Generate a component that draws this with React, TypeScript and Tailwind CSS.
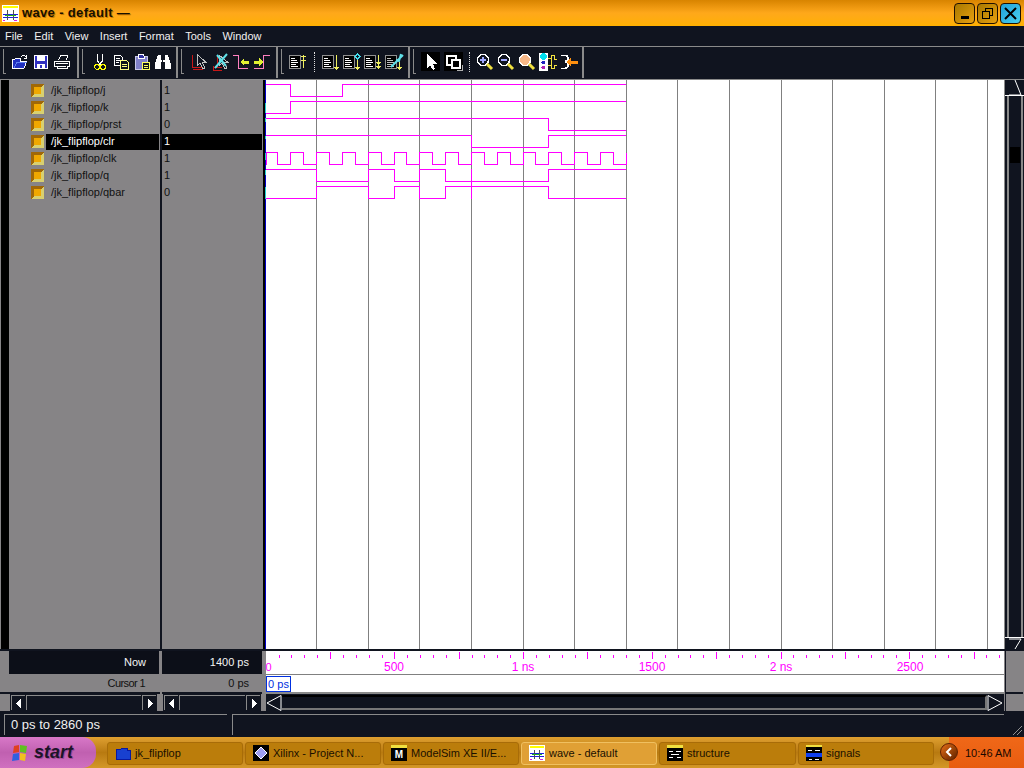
import React from "react";

const SIGNALS = [
  { name: "/jk_flipflop/j", value: "1" },
  { name: "/jk_flipflop/k", value: "1" },
  { name: "/jk_flipflop/prst", value: "0" },
  { name: "/jk_flipflop/clr", value: "1", selected: true },
  { name: "/jk_flipflop/clk", value: "1" },
  { name: "/jk_flipflop/q", value: "1" },
  { name: "/jk_flipflop/qbar", value: "0" },
];

const MENU = ["File", "Edit", "View", "Insert", "Format", "Tools", "Window"];
const GRID = [316, 368, 419, 471, 523, 574, 626, 677, 729, 781, 832, 884, 935, 987];

const WAVES = [
  "M266 84.5H290.5V96.5H342.5V84.5H626",
  "M266 113.5H290.5V101.5H626",
  "M266 118.5H548.5V130.5H626",
  "M266 135.5H471.5V147.5H548.5V135.5H626",
  "M266.5 164.5V152.5H277.5V164.5H290.5V152.5H303.5V164.5H316.5V152.5H329.5V164.5H342.5V152.5H355.5V164.5H368.5V152.5H381.5V164.5H394.5V152.5H406.5V164.5H419.5V152.5H432.5V164.5H445.5V152.5H458.5V164.5H471.5V152.5H484.5V164.5H497.5V152.5H510.5V164.5H523.5V152.5H535.5V164.5H548.5V152.5H561.5V164.5H574.5V152.5H587.5V164.5H600.5V152.5H613.5V164.5H626.5V153",
  "M266 169.5H316.5V181.5H368.5V169.5H394.5V181.5H419.5V169.5H445.5V181.5H548.5V169.5H626",
  "M266 198.5H316.5V186.5H368.5V198.5H394.5V186.5H419.5V198.5H445.5V186.5H548.5V198.5H626",
  "M471.5 169V199",
];

function WaveChart() {
  return (
    <svg className="block" width="741" height="569" viewBox="263 80 741 569" shapeRendering="crispEdges">
      <rect x="263" y="80" width="741" height="569" fill="#ffffff" />
      <rect x="263" y="80" width="2" height="569" fill="#000000" />
      <rect x="265" y="80" width="1" height="569" fill="#0000c8" />
      <path d="M265.5 103V113M265.5 118V122M265.5 136V139M265.5 153V160M265.5 170V175M265.5 187V199" stroke="#20d0d0" fill="none" />
      {GRID.map((x) => (
        <path key={x} d={`M${x + 0.5} 80V649`} stroke="#808080" fill="none" />
      ))}
      {WAVES.map((d, i) => (
        <path key={i} d={d} stroke="#ff00ff" fill="none" />
      ))}
    </svg>
  );
}

function TimeAxis() {
  const ticks = [];
  for (let i = 1; i * 12.87 < 737; i++) {
    const x = Math.round(265.7 + i * 12.87) + 0.5;
    ticks.push(<path key={i} d={i % 5 === 0 ? `M${x} 652V659` : `M${x} 655V658`} stroke="#ff00ff" fill="none" />);
  }
  const labels = [
    { x: 394, t: "500" },
    { x: 523, t: "1 ns" },
    { x: 652, t: "1500" },
    { x: 781, t: "2 ns" },
    { x: 910, t: "2500" },
  ];
  return (
    <svg className="block" width="741" height="23" viewBox="263 651 741 23">
      <rect x="263" y="651" width="741" height="23" fill="#ffffff" />
      <rect x="263" y="651" width="3" height="23" fill="#868486" />
      <g shapeRendering="crispEdges">{ticks}</g>
      <text x="265.5" y="671" fill="#ff00ff" fontSize="11" fontFamily="'Liberation Sans',sans-serif">0</text>
      {labels.map((l) => (
        <text key={l.t} x={l.x} y="671" fill="#ff00ff" fontSize="12" textAnchor="middle" fontFamily="'Liberation Sans',sans-serif">
          {l.t}
        </text>
      ))}
    </svg>
  );
}

function WaveIcon({ size = 16 }: { size?: number }) {
  return (
    <svg width={size} height={size} viewBox="0 0 16 16" shapeRendering="crispEdges" className="shrink-0">
      <rect width="16" height="16" fill="#ffffff" />
      <rect x="1" y="1" width="14" height="2" fill="#ffff00" />
      <path d="M1 8.5H15M1 11.5H15" stroke="#2020e0" />
      <path d="M5.5 5V14M10.5 5V14" stroke="#505050" />
      <path d="M3 9.5H13" stroke="#20b020" />
      <path d="M1 14.5H3M11 14.5H14" stroke="#e020e0" />
    </svg>
  );
}

function SignalIcon() {
  return (
    <svg width="13" height="13" viewBox="0 0 13 13" shapeRendering="crispEdges" className="shrink-0">
      <rect width="13" height="13" fill="#d8c860" />
      <path d="M0 0H13L10 3H3V10L0 13Z" fill="#a06808" />
      <rect x="3" y="3" width="7" height="7" fill="#f0a800" />
      <path d="M10 3L13 0V13H0L3 10H10Z" fill="#d8d070" />
    </svg>
  );
}

const TOOL_ICONS: { [name: string]: React.ReactNode } = {
  open: (
    <>
      <path d="M2 16V7H5L6 6H10V9H17L14 16Z" fill="#2030c0" stroke="#fff" />
      <path d="M4 16L7 10H17" stroke="#6080f0" fill="none" />
      <path d="M11 5C13 3 15 3 16 5M16 3V6H14" stroke="#fff" fill="none" />
    </>
  ),
  save: (
    <>
      <rect x="3.5" y="3.5" width="13" height="13" fill="#3030c0" stroke="#fff" />
      <rect x="6" y="4" width="8" height="5" fill="#fff" />
      <rect x="6" y="12" width="8" height="4" fill="#fff" />
      <rect x="9" y="13" width="2" height="3" fill="#3030c0" />
    </>
  ),
  print: (
    <>
      <path d="M6.5 8.5L8.5 3.5H15.5L14.5 8.5" stroke="#fff" fill="none" />
      <path d="M2.5 9.5H17.5V14.5H15V16.5H5V14.5H2.5Z" stroke="#fff" fill="#10141f" />
      <path d="M4 11.5H16M6 14H14" stroke="#fff" />
    </>
  ),
  cut: (
    <>
      <path d="M7.5 2V9L11 13M12.5 2V9L9 13" stroke="#fff" fill="none" />
      <circle cx="7" cy="15" r="2.3" stroke="#ffff00" fill="none" strokeWidth="1.2" />
      <circle cx="13" cy="15" r="2.3" stroke="#ffff00" fill="none" strokeWidth="1.2" />
    </>
  ),
  copy: (
    <>
      <path d="M3.5 3.5H9.5L11.5 5.5V13.5H3.5Z" fill="#10141f" stroke="#fff" />
      <path d="M5 6H9M5 8H9M5 10H8" stroke="#fff" />
      <path d="M9.5 8.5H15.5L17.5 10.5V17.5H9.5Z" fill="#10141f" stroke="#ffff80" />
      <path d="M11 12H16M11 14H16" stroke="#ffff80" />
    </>
  ),
  paste: (
    <>
      <rect x="3" y="4" width="12" height="13" fill="#8080c8" stroke="#c8c8e8" />
      <path d="M6 4L7 2H11L12 4V6H6Z" fill="#3030a0" stroke="#fff" />
      <rect x="10.5" y="10.5" width="7" height="7" fill="#10141f" stroke="#ffff60" />
      <path d="M12 13H16M12 15H16" stroke="#ffff60" />
    </>
  ),
  find: (
    <>
      <path d="M5 3H8V8H12V3H15L18 12V17H12V10H8V17H2V12Z" fill="#fff" />
      <path d="M9.5 4V16" stroke="#10141f" />
    </>
  ),
  select: (
    <>
      <path d="M3.5 3V16M3.5 15.5H13M3.5 17.5H13M13.5 15V18" stroke="#c81818" fill="none" />
      <path d="M8 2V14L11 11L14 17L16 16L13.5 10.5H17Z" stroke="#c0c0c0" fill="#10141f" />
    </>
  ),
  unselect: (
    <>
      <path d="M3.5 14V18H12M3.5 15H12M7.5 3V15" stroke="#c81818" fill="none" />
      <path d="M9 3V14L12 11L15 17L17 16L14 10.5H18Z" stroke="#c0c0c0" fill="#10141f" />
      <path d="M7 3L16 14M17 2L5 16" stroke="#60e0e8" strokeWidth="2" shapeRendering="auto" />
    </>
  ),
  prev: (
    <>
      <path d="M2 3.5H7.5V16.5H17" stroke="#ff80c0" fill="none" />
      <path d="M9 10L13 6V8.5H18V11.5H13V14Z" fill="#e0f030" />
    </>
  ),
  next: (
    <>
      <path d="M18 3.5H11.5V16.5H2" stroke="#ff80c0" fill="none" />
      <path d="M11 10L7 6V8.5H2V11.5H7V14Z" fill="#e0f030" />
    </>
  ),
};

function List({ tone = "#fff" }: { tone?: string }) {
  return (
    <>
      <rect x="1.5" y="3.5" width="11" height="13" fill="#000" stroke="#909090" />
      <path d="M3 6H7M3 8H9M3 10H10M3 12H8M3 14H10" stroke={tone} />
    </>
  );
}

const MORE_ICONS: { [name: string]: React.ReactNode } = {
  add: (
    <>
      <List />
      <path d="M15.5 3V16M13 4.5H18M13 8.5H18" stroke="#f0f060" />
    </>
  ),
  down: (
    <>
      <List />
      <path d="M15.5 3V15" stroke="#f0f060" />
      <path d="M12 15H19L15.5 18Z" fill="#f0f060" />
    </>
  ),
  diamond: (
    <>
      <List />
      <path d="M15.5 7V15" stroke="#f0f060" />
      <path d="M15.5 2L18 4.5L15.5 7L13 4.5Z" fill="none" stroke="#40e0f0" />
      <path d="M12 15H19L15.5 18Z" fill="#f0f060" />
    </>
  ),
  double: (
    <>
      <List />
      <path d="M15.5 3V14" stroke="#f0f060" />
      <path d="M12 10H19L15.5 13ZM12 14H19L15.5 17Z" fill="#f0f060" />
    </>
  ),
  clear: (
    <>
      <List tone="#c0c0c0" />
      <path d="M15.5 10V15" stroke="#f0f060" />
      <path d="M12 15H19L15.5 18Z" fill="#f0f060" />
      <path d="M7 15L19 3M17 2L15 9L12 8" stroke="#60e0e8" strokeWidth="2" fill="none" shapeRendering="auto" />
    </>
  ),
  arrow: <path d="M6 2V16L9 13L12 18L14 17L12 12H16Z" fill="#fff" />,
  zoomArea: (
    <>
      <rect x="2.5" y="3.5" width="9" height="9" fill="none" stroke="#fff" strokeWidth="2" />
      <rect x="7.5" y="7.5" width="8" height="8" fill="#000" stroke="#fff" strokeWidth="2" />
      <path d="M13 18.5H18.5V13" stroke="#b0b0b0" fill="none" />
    </>
  ),
  zoomIn: (
    <>
      <circle cx="8" cy="8" r="5.5" fill="#10141f" stroke="#fff" strokeWidth="1.4" />
      <path d="M8 5V11M5 8H11" stroke="#a0a8ff" strokeWidth="2" />
      <path d="M12 12L17 17" stroke="#f0e040" strokeWidth="3" shapeRendering="auto" />
    </>
  ),
  zoomOut: (
    <>
      <circle cx="8" cy="8" r="5.5" fill="#10141f" stroke="#fff" strokeWidth="1.4" />
      <path d="M5 8H11" stroke="#a0a8ff" strokeWidth="2" />
      <path d="M12 12L17 17" stroke="#f0e040" strokeWidth="3" shapeRendering="auto" />
    </>
  ),
  zoomFull: (
    <>
      <circle cx="8" cy="8" r="5.5" fill="#f8b888" stroke="#fff" strokeWidth="1.4" />
      <path d="M12 12L17 17" stroke="#f0e040" strokeWidth="3" shapeRendering="auto" />
    </>
  ),
  dataflow: (
    <>
      <rect x="1" y="1" width="9" height="18" fill="#fff" />
      <circle cx="5.5" cy="4.5" r="3.3" fill="#00e0f0" />
      <circle cx="5.5" cy="10.5" r="2" fill="#2020c0" />
      <circle cx="5.5" cy="15.5" r="2" fill="#b020b0" />
      <path d="M10 6H13V3.5H16V7H19M10 13H13V16.5H16V13H19M13 6V13" stroke="#f0e040" fill="none" />
    </>
  ),
  gate: (
    <>
      <path d="M2 3.5H6C10 3.5 10 9 6 9.5C10 10 10 16.5 6 16.5H2" stroke="#fff" strokeWidth="1.6" fill="none" />
      <path d="M7 10L12 6V8.5H19V11.5H12V14Z" fill="#ff9010" />
    </>
  ),
};

function Tool({ children, className = "" }: { children: React.ReactNode; className?: string }) {
  return (
    <svg width="20" height="20" viewBox="0 0 20 20" shapeRendering="crispEdges" className={"shrink-0 " + className}>
      {children}
    </svg>
  );
}

function Grip() {
  return <div className="w-[3px] h-[25px] border-l border-b border-[#8a8a8a] mr-[4px] shrink-0" />;
}

function Dots() {
  return <div className="w-0 h-[20px] border-l border-dotted border-[#e0e0e0] shrink-0" />;
}

function ToolGroup({ width, children }: { width: string; children: React.ReactNode }) {
  return <div className={"h-[31px] flex items-center pl-[3px] pb-[2px] border-r-2 border-[#8a8a8a] shrink-0 " + width}>{children}</div>;
}

function ScrollArrow({ dir }: { dir: "left" | "right" }) {
  return (
    <div className="w-[14px] h-[15px] border-t border-l border-[#8a8a8a] flex items-center justify-center shrink-0">
      <svg width="6" height="9" viewBox="0 0 6 9" shapeRendering="crispEdges">
        <path d={dir === "left" ? "M5 0V9L0 4.5Z" : "M1 0V9L6 4.5Z"} fill="#fff" />
      </svg>
    </div>
  );
}

function HScroll() {
  return (
    <div className="h-full flex items-center px-[1px] bg-[#868486]">
      <div className="flex-1 h-full flex items-center gap-[1px] bg-[#10141f] px-[1px]">
        <ScrollArrow dir="left" />
        <div className="flex-1 h-[15px] border-t border-l border-[#8a8a8a]" />
        <ScrollArrow dir="right" />
      </div>
    </div>
  );
}

function TaskButton({ icon, label, active, width }: { icon: React.ReactNode; label: string; active?: boolean; width: string }) {
  return (
    <div
      className={
        "h-[23px] mt-[1px] flex items-center gap-[4px] pl-[7px] rounded-[3px] text-[11px] whitespace-nowrap shrink-0 " +
        width +
        (active
          ? " bg-[#e0a035] border border-[#f0c060] text-[#1a1000]"
          : " bg-[#bb7d0b] border border-[#a86c08] text-[#1a1000]")
      }
    >
      {icon}
      <span>{label}</span>
    </div>
  );
}

function TaskIcon({ children }: { children: React.ReactNode }) {
  return (
    <svg width="16" height="16" viewBox="0 0 16 16" shapeRendering="crispEdges" className="shrink-0">
      {children}
    </svg>
  );
}

export default function App() {
  return (
    <div className="w-[1024px] h-[768px] overflow-hidden flex flex-col bg-[#10141f] text-[11px] [font-family:'Liberation_Sans',Arial,sans-serif]">
      {/* title bar */}
      <div className="h-[26px] shrink-0 flex items-center bg-gradient-to-b from-[#d88400] via-[#ffa81a] to-[#ffb000] pl-[2px] pr-[3px]">
        <WaveIcon size={17} />
        <span className="ml-[3px] text-[13px] font-bold tracking-[0.35px] text-[#181000] [text-shadow:1px_1px_0_#c87800]">
          wave - default —
        </span>
        <div className="ml-auto flex gap-[2px]">
          <div className="w-[21px] h-[21px] rounded-[4px] border border-[#201000] bg-gradient-to-br from-[#a87800] to-[#e8a010] flex items-end justify-center pb-[4px]">
            <div className="w-[8px] h-[3px] bg-black" />
          </div>
          <div className="w-[21px] h-[21px] rounded-[4px] border border-[#201000] bg-gradient-to-br from-[#a87800] to-[#e8a010] flex items-center justify-center">
            <svg width="11" height="11" viewBox="0 0 11 11" shapeRendering="crispEdges">
              <path d="M3.5 3V0.5H10.5V7.5H8M0.5 3.5H7.5V10.5H0.5Z" stroke="#000" fill="none" />
            </svg>
          </div>
          <div className="w-[21px] h-[21px] rounded-[4px] border border-[#201000] bg-gradient-to-br from-[#20a0d8] to-[#48d0f0] flex items-center justify-center">
            <svg width="13" height="13" viewBox="0 0 13 13">
              <path d="M1 1L12 12M12 1L1 12" stroke="#000" strokeWidth="2" />
            </svg>
          </div>
        </div>
      </div>

      {/* menu */}
      <div className="h-[20px] shrink-0 flex items-center pl-[5px] gap-[11.5px] text-[11px] text-[#f0f0f0] border-b border-[#8a8a8a] box-content">
        {MENU.map((m) => (
          <span key={m}>{m}</span>
        ))}
      </div>

      {/* toolbar */}
      <div className="h-[32px] shrink-0 flex items-start">
        <ToolGroup width="w-[79px]">
          <Grip />
          <div className="flex gap-[1px]">
            <Tool>{TOOL_ICONS.open}</Tool>
            <Tool>{TOOL_ICONS.save}</Tool>
            <Tool>{TOOL_ICONS.print}</Tool>
          </div>
        </ToolGroup>
        <ToolGroup width="w-[99px]">
          <Grip />
          <div className="flex gap-[1px] ml-[1px]">
            <Tool>{TOOL_ICONS.cut}</Tool>
            <Tool>{TOOL_ICONS.copy}</Tool>
            <Tool>{TOOL_ICONS.paste}</Tool>
            <Tool>{TOOL_ICONS.find}</Tool>
          </div>
        </ToolGroup>
        <ToolGroup width="w-[100px]">
          <Grip />
          <div className="flex gap-[1px] ml-[1px]">
            <Tool>{TOOL_ICONS.select}</Tool>
            <Tool>{TOOL_ICONS.unselect}</Tool>
            <Tool>{TOOL_ICONS.prev}</Tool>
            <Tool>{TOOL_ICONS.next}</Tool>
          </div>
        </ToolGroup>
        <ToolGroup width="w-[132px]">
          <Grip />
          <Tool>{MORE_ICONS.add}</Tool>
          <div className="ml-[6px] mr-[6px]">
            <Dots />
          </div>
          <div className="flex gap-[1px]">
            <Tool>{MORE_ICONS.down}</Tool>
            <Tool>{MORE_ICONS.diamond}</Tool>
            <Tool>{MORE_ICONS.double}</Tool>
            <Tool>{MORE_ICONS.clear}</Tool>
          </div>
        </ToolGroup>
        <ToolGroup width="w-[174px]">
          <Grip />
          <div className="w-[19px] h-[19px] bg-black flex items-center justify-center ml-[1px]">
            <Tool>{MORE_ICONS.arrow}</Tool>
          </div>
          <div className="w-[19px] h-[19px] bg-black flex items-center justify-center ml-[4px]">
            <Tool>{MORE_ICONS.zoomArea}</Tool>
          </div>
          <div className="ml-[6px] mr-[5px]">
            <Dots />
          </div>
          <div className="flex gap-[1px]">
            <Tool>{MORE_ICONS.zoomIn}</Tool>
            <Tool>{MORE_ICONS.zoomOut}</Tool>
            <Tool>{MORE_ICONS.zoomFull}</Tool>
            <Tool>{MORE_ICONS.dataflow}</Tool>
            <Tool>{MORE_ICONS.gate}</Tool>
          </div>
        </ToolGroup>
      </div>

      {/* panes */}
      <div className="h-[632px] shrink-0 grid grid-cols-[160px_103px_741px_20px] grid-rows-[569px_2px_23px_18px_19px] border-t border-[#8a8a8a] bg-[#868486] text-[#111]">
        <div className="pl-[9px] border-r-2 border-[#10141f] pt-[2px] w-[162px] bg-[#868486] relative">
          <div className="absolute left-[1px] top-0 bottom-0 w-[8px] bg-black" />
          {SIGNALS.map((s) => (
            <div key={s.name} className="h-[17px] flex items-center">
              <div className="ml-[22px] w-[15px]">
                <SignalIcon />
              </div>
              <div className={s.selected ? "bg-black text-white h-[16px] w-[113px] flex items-center pl-[5px]" : "pl-[5px]"}>{s.name}</div>
            </div>
          ))}
        </div>
        <div className="pt-[2px] ml-[2px] w-[100px] bg-[#868486]">
          {SIGNALS.map((s) => (
            <div key={s.name} className="h-[17px] flex items-center">
              <div className={"w-full h-[16px] flex items-center pl-[2px] " + (s.selected ? "bg-black text-white" : "")}>{s.value}</div>
            </div>
          ))}
        </div>
        <div className="bg-white">
          <WaveChart />
        </div>
        <div className="bg-[#10141f] border-l border-[#8a8a8a] flex flex-col">
          <div className="h-[16px] border-b border-white flex justify-center">
            <svg width="14" height="15" viewBox="0 0 14 15">
              <path d="M7 0L13 15H1" stroke="#fff" fill="none" />
            </svg>
          </div>
          <div className="flex-1 ml-[2px] mr-[1px] border-x-2 border-[#8a8a8a] relative">
            <div className="absolute left-[1px] right-[1px] top-[51px] h-[16px] bg-black" />
          </div>
          <div className="h-[12px] flex justify-center border-t border-white">
            <svg width="14" height="11" viewBox="0 0 14 11">
              <path d="M7 11L13 1H1" stroke="#fff" fill="none" />
            </svg>
          </div>
        </div>

        <div className="col-span-4 bg-[#10141f]" />

        <div className="pl-[9px]">
          <div className="h-full bg-[#0c0f18] text-[#f4f4f4] flex items-center justify-end pr-[13px] w-[150px]">Now</div>
        </div>
        <div className="ml-[2px] w-[100px] bg-[#0c0f18] text-[#f4f4f4] flex items-center justify-end pr-[13px]">1400 ps</div>
        <div className="bg-white">
          <TimeAxis />
        </div>
        <div className="row-span-2 bg-[#868486] ml-[1px] mr-[1px] border-l border-[#10141f]" />

        <div className="flex items-center justify-end pr-[15px] tracking-[-0.6px]">Cursor 1</div>
        <div className="flex items-center justify-end pr-[13px] w-[100px] ml-[2px]">0 ps</div>
        <div className="bg-white border-l-[3px] border-l-[#868486] border-t border-t-[#808080] pt-[1px]">
          <div className="w-[25px] h-[16px] border border-[#0030e0] text-[#0030e0] text-[11px] leading-[14px] text-center">0 ps</div>
        </div>

        <div className="bg-[#868486] border-t-2 border-[#10141f] pl-[9px] pr-[2px] w-[160px]">
          <HScroll />
        </div>
        <div className="bg-[#868486] border-t-2 border-[#10141f] ml-[2px] w-[100px]">
          <HScroll />
        </div>
        <div className="bg-[#10141f] border-t-2 border-[#8a8a8a] flex items-center border-l-[3px] border-l-[#868486]">
          <svg width="16" height="16" viewBox="0 0 16 16" className="shrink-0">
            <path d="M15 0.5V15.5L1 8L15 0.5" stroke="#fff" fill="none" />
          </svg>
          <div className="flex-1 h-[15px] bg-[#10141f] border-t-2 border-t-black border-b-2 border-b-[#777] border-r-2 border-r-[#777]" />
          <svg width="16" height="16" viewBox="0 0 16 16" className="shrink-0 mr-[1px]">
            <path d="M1 0.5V15.5L15 8L1 0.5" stroke="#fff" fill="none" />
          </svg>
        </div>
        <div className="bg-[#868486] ml-[1px] mr-[1px] border-t-2 border-l border-[#10141f]" />
      </div>

      {/* status bar */}
      <div className="h-[26px] shrink-0 flex items-center gap-[5px] pl-[4px] pr-[20px] text-[13px] text-[#f0f0f0] bg-[#10141f] relative">
        <div className="w-[223px] h-[21px] border-t border-l border-[#8a8a8a] flex items-center pl-[6px]">0 ps to 2860 ps</div>
        <div className="flex-1 h-[21px] border-t border-l border-[#8a8a8a]" />
        <svg width="10" height="10" viewBox="0 0 10 10" className="absolute right-[2px] bottom-[2px]">
          <path d="M1 10L10 1M5 10L10 5" stroke="#909090" fill="none" />
        </svg>
      </div>

      {/* taskbar */}
      <div className="flex-1 flex items-center bg-gradient-to-b from-[#e0a030] via-[#b87a10] to-[#d49828] text-[#111]">
        <div className="w-[96px] h-full rounded-r-[14px] bg-gradient-to-b from-[#d878c8] via-[#c060b0] to-[#d070c0] flex items-center pl-[11px] gap-[5px] shrink-0">
          <svg width="18" height="18" viewBox="0 0 18 18" className="shrink-0">
            <path d="M3 2L8 1V8L2 9Z" fill="#e04020" />
            <path d="M9 1L16 2L15 9L9 8Z" fill="#60c020" />
            <path d="M2 10L8 9V16L1 17Z" fill="#3060e0" />
            <path d="M9 9L15 10L14 17L9 16Z" fill="#f0c020" />
          </svg>
          <span className="text-[18px] font-bold italic text-[#1c1428] [text-shadow:1px_1px_0_#a04898]">start</span>
        </div>
        <div className="w-[11px] shrink-0" />
        <div className="flex gap-[2px]">
          <TaskButton
            width="w-[136px]"
            label="jk_flipflop"
            icon={
              <TaskIcon>
                <path d="M1 4H6L7 3H12V5H15V14H1Z" fill="#1840d0" stroke="#0818a0" />
              </TaskIcon>
            }
          />
          <TaskButton
            width="w-[136px]"
            label="Xilinx - Project N..."
            icon={
              <TaskIcon>
                <rect width="16" height="16" fill="#000" />
                <path d="M8 2L14 8L8 14L2 8Z" fill="#a0a0f0" stroke="#fff" />
              </TaskIcon>
            }
          />
          <TaskButton
            width="w-[136px]"
            label="ModelSim XE II/E..."
            icon={
              <svg width="16" height="16" viewBox="0 0 16 16" className="shrink-0 overflow-visible">
                <rect width="16" height="16" fill="#000" />
                <rect width="16" height="3" fill="#f0e040" />
                <text x="8" y="13" textAnchor="middle" fontSize="10" fontWeight="bold" fill="#fff" fontFamily="'Liberation Sans',sans-serif">M</text>
              </svg>
            }
          />
          <TaskButton width="w-[136px]" label="wave - default" active icon={<WaveIcon />} />
          <TaskButton
            width="w-[137px]"
            label="structure"
            icon={
              <TaskIcon>
                <rect width="16" height="16" fill="#000" />
                <rect width="16" height="3" fill="#f0e040" />
                <path d="M2 6H6M9 6H14M4 9H12M2 12H6M10 12H14" stroke="#fff" />
              </TaskIcon>
            }
          />
          <TaskButton
            width="w-[136px]"
            label="signals"
            icon={
              <TaskIcon>
                <rect width="16" height="16" fill="#000" />
                <rect width="16" height="2" fill="#f0e040" />
                <path d="M2 5H6M9 5H14" stroke="#fff" />
                <rect y="8" width="16" height="4" fill="#1040f0" />
                <path d="M3 14H6M9 14H13" stroke="#fff" />
              </TaskIcon>
            }
          />
        </div>
        <div className="ml-auto w-[75px] h-full bg-gradient-to-b from-[#f06818] to-[#e85c10] flex items-center relative text-[11px] text-[#1a0800] pl-[16px] pt-[1px] shrink-0">
          <div className="absolute -left-[9px] top-[6px] w-[18px] h-[18px] rounded-full bg-gradient-to-br from-[#e87018] to-[#602000] border border-[#602000] flex items-center justify-center">
            <svg width="8" height="10" viewBox="0 0 8 10">
              <path d="M6 1L2 5L6 9" stroke="#fff" strokeWidth="2" fill="none" />
            </svg>
          </div>
          10:46 AM
        </div>
      </div>
    </div>
  );
}
